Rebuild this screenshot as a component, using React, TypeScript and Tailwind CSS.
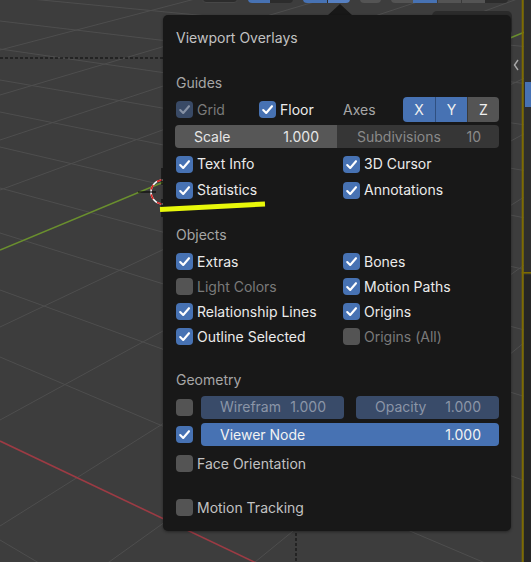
import React from "react";

type CheckState = "on" | "off" | "dim";

function Check({ state }: { state: CheckState }) {
  const bg =
    state === "on" ? "bg-[#4772b3]" : state === "dim" ? "bg-[#394a66]" : "bg-[#545454]";
  return (
    <span className={`relative w-[17px] h-[17px] shrink-0 rounded-[4px] ${bg}`}>
      {state !== "off" && (
        <svg className="absolute inset-0" width="17" height="17" viewBox="0 0 17 17">
          <path
            d="M4.2 9 L7.2 12 L13 5.2"
            fill="none"
            stroke={state === "dim" ? "#8792a5" : "#ffffff"}
            strokeWidth="2.1"
            strokeLinecap="round"
            strokeLinejoin="round"
          />
        </svg>
      )}
    </span>
  );
}

function Item({
  state,
  label,
  tone = "normal",
  className = "",
}: {
  state: CheckState;
  label: string;
  tone?: "normal" | "dim" | "soft";
  className?: string;
}) {
  const color =
    tone === "dim" ? "text-[#7a7a7a]" : tone === "soft" ? "text-[#c2c2c2]" : "text-[#ebebeb]";
  return (
    <div className={`flex items-center gap-[4px] ${className}`}>
      <Check state={state} />
      <span className={color}>{label}</span>
    </div>
  );
}

function Pair({
  left,
  right,
  tall = false,
}: {
  left: React.ReactNode;
  right: React.ReactNode;
  tall?: boolean;
}) {
  return (
    <div className={`grid grid-cols-[167px_1fr] items-center ${tall ? "h-[26px]" : "h-[25px]"}`}>
      {left}
      {right}
    </div>
  );
}

// perspective floor grid of the 3D viewport
const vpA = { x: -1100, y: -110 };
const vpB = { x: 1300, y: -290 };
const rowsA = [-4, 21, 49, 80, 112, 147, 188, 233, 290, 357, 441, 540, 660];
const rowsB = [-10, 50, 95, 140, 190, 250, 327, 420, 526, 640, 770];

function lineThrough(vp: { x: number; y: number }, y0: number) {
  const slope = (y0 - vp.y) / (0 - vp.x);
  return { x1: 0, y1: y0, x2: 531, y2: y0 + slope * 531 };
}

function Viewport() {
  return (
    <svg className="absolute inset-0" width="531" height="562" viewBox="0 0 531 562">
      <rect width="531" height="562" fill="#3d3d3d" />
      {rowsA.map((y) =>
        y === 441 ? null : <line key={"a" + y} {...lineThrough(vpA, y)} stroke="#4e4e4e" strokeWidth="1" />
      )}
      {rowsB.map((y) =>
        y === 250 ? null : <line key={"b" + y} {...lineThrough(vpB, y)} stroke="#4e4e4e" strokeWidth="1" />
      )}
      {/* axes */}
      <line {...lineThrough(vpB, 250)} stroke="#6a8f2e" strokeWidth="1.6" />
      <line x1="0" y1="441" x2="531" y2={441 + 0.476 * 531} stroke="#9c3b44" strokeWidth="1.6" />
      {/* dashed relation line */}
      <line x1="0" y1="58" x2="165" y2="58" stroke="#0a0a0a" strokeWidth="1" strokeDasharray="3 2" />
      <line x1="296" y1="528" x2="296" y2="562" stroke="#0a0a0a" strokeWidth="1" strokeDasharray="3 2" />
      {/* 3D cursor */}
      <circle cx="163" cy="192" r="12" fill="none" stroke="#ffffff" strokeWidth="1.6" />
      <circle cx="163" cy="192" r="12" fill="none" stroke="#e02020" strokeWidth="1.6" strokeDasharray="5 5" />
      <line x1="138" y1="192" x2="156" y2="192" stroke="#000" strokeWidth="1" />
      <line x1="162" y1="168" x2="162" y2="185" stroke="#000" strokeWidth="1" />
      <line x1="162" y1="199" x2="162" y2="217" stroke="#000" strokeWidth="1" />
      {/* right side region border */}
      <rect x="524" y="0" width="7" height="275" fill="#2e2e2e" />
      <rect x="524" y="275" width="7" height="287" fill="#252525" />
      <rect x="525" y="82" width="6" height="25" fill="#4772b3" />
      <rect x="521.7" y="0" width="2" height="562" fill="#7d6b00" />
      <rect x="521.7" y="272" width="9.3" height="1.6" fill="#7d6b00" />
      <path d="M518 60 L514.5 65 L518 70" fill="none" stroke="#a8a8a8" strokeWidth="1.4" />
    </svg>
  );
}

function HeaderButtons() {
  return (
    <div className="absolute left-0 top-[-10px] flex h-[13px] w-full">
      <div className="ml-[202px] w-[36px] rounded-[4px] bg-[#2c2c2c] border border-[#474747]" />
      <div className="ml-[10px] flex w-[45px] overflow-hidden rounded-[4px]">
        <div className="w-[22px] bg-[#4772b3]" />
        <div className="flex-1 bg-[#2c2c2c]" />
      </div>
      <div className="ml-[10px] flex w-[47px] overflow-hidden rounded-[4px]">
        <div className="w-[24px] bg-[#4772b3]" />
        <div className="flex-1 bg-[#5680c2] border-l border-[#2c2c2c]" />
      </div>
      <div className="ml-[10px] w-[21px] rounded-[4px] bg-[#545454]" />
      <div className="ml-[10px] flex w-[117px] overflow-hidden rounded-[4px]">
        <div className="w-[22px] bg-[#545454]" />
        <div className="w-[24px] bg-[#4772b3]" />
        <div className="w-[24px] bg-[#545454] border-l border-[#3a3a3a]" />
        <div className="w-[24px] bg-[#545454] border-l border-[#3a3a3a]" />
        <div className="flex-1 bg-[#2c2c2c]" />
      </div>
    </div>
  );
}

function Field({
  label,
  value,
  className,
  text,
}: {
  label: string;
  value: string;
  className: string;
  text: string;
}) {
  return (
    <div className={`flex h-[23px] items-center justify-between pl-[19px] pr-[18px] ${className} ${text}`}>
      <span>{label}</span>
      <span>{value}</span>
    </div>
  );
}

export default function App() {
  return (
    <div className="relative h-[562px] w-[531px] overflow-hidden font-['Inter','Noto_Sans',sans-serif] text-[14px] leading-[18px]">
      <Viewport />
      <HeaderButtons />
      {/* button partly hidden behind the popover */}
      <div className="absolute left-[432px] top-[11px] h-[24px] w-[80px] rounded-[5px] bg-[#2b2b2b]" />
      {/* popover pointer */}
      <div className="absolute left-[327px] top-[4px] h-0 w-0 border-x-[13px] border-b-[12px] border-x-transparent border-b-[#181818]" />

      <div className="absolute left-[163px] top-[15px] flex h-[516px] w-[348px] flex-col rounded-[5px] bg-[#181818] pl-[13px] pr-[12px] shadow-[0_1px_3px_rgba(0,0,0,0.4)]">
        <div className="flex h-[46px] items-center text-[#c2c2c2]">Viewport Overlays</div>

        <div className="mt-[13px] flex h-[18px] items-center text-[#a6a6a6]">Guides</div>
        <div className="mt-[5px] flex h-[25px] items-center">
          <Item state="dim" label="Grid" tone="dim" className="w-[83px]" />
          <Item state="on" label="Floor" className="w-[84px]" />
          <span className="w-[60px] text-[#a6a6a6]">Axes</span>
          <div className="flex h-[25px] w-[96px] overflow-hidden rounded-[4px] text-[#f0f0f0]">
            <div className="flex w-[32px] items-center justify-center bg-[#4772b3]">X</div>
            <div className="flex w-[32px] items-center justify-center border-l border-[#2f4f80] bg-[#4772b3]">Y</div>
            <div className="flex w-[32px] items-center justify-center border-l border-[#3a3a3a] bg-[#545454]">Z</div>
          </div>
        </div>
        <div className="mt-[3px] ml-[-1px] flex h-[23px] w-[324px] overflow-hidden rounded-[4px]">
          <Field label="Scale" value="1.000" className="w-[162px] bg-[#575757]" text="text-[#e6e6e6]" />
          <Field
            label="Subdivisions"
            value="10"
            className="w-[162px] bg-[#363636] pr-[17px] pl-[20px]"
            text="text-[#8a8a8a]"
          />
        </div>
        <div className="mt-[3px] flex flex-col">
          <Pair
            tall
            left={<Item state="on" label="Text Info" />}
            right={<Item state="on" label="3D Cursor" />}
          />
          <Pair
            tall
            left={<Item state="on" label="Statistics" />}
            right={<Item state="on" label="Annotations" />}
          />
        </div>

        <div className="mt-[23px] flex h-[18px] items-center text-[#a6a6a6]">Objects</div>
        <div className="mt-[5px] flex flex-col">
          <Pair left={<Item state="on" label="Extras" />} right={<Item state="on" label="Bones" />} />
          <Pair
            left={<Item state="off" label="Light Colors" tone="dim" />}
            right={<Item state="on" label="Motion Paths" />}
          />
          <Pair
            left={<Item state="on" label="Relationship Lines" />}
            right={<Item state="on" label="Origins" />}
          />
          <Pair
            left={<Item state="on" label="Outline Selected" />}
            right={<Item state="off" label="Origins (All)" tone="dim" />}
          />
        </div>

        <div className="mt-[22px] flex h-[18px] items-center text-[#a6a6a6]">Geometry</div>
        <div className="mt-[6px] flex h-[24px] items-center">
          <Check state="off" />
          <Field
            label="Wirefram"
            value="1.000"
            className="ml-[8px] w-[143px] rounded-[4px] bg-[#394b69]"
            text="text-[#8b95a7]"
          />
          <Field
            label="Opacity"
            value="1.000"
            className="ml-[12px] w-[143px] rounded-[4px] bg-[#394b69]"
            text="text-[#8b95a7]"
          />
        </div>
        <div className="mt-[4px] flex h-[23px] items-center">
          <Check state="on" />
          <Field
            label="Viewer Node"
            value="1.000"
            className="ml-[8px] w-[298px] rounded-[4px] bg-[#4772b3]"
            text="text-[#f2f2f2]"
          />
        </div>
        <div className="mt-[5px] flex h-[25px] items-center">
          <Item state="off" label="Face Orientation" tone="soft" />
        </div>
        <div className="mt-[19px] flex h-[25px] items-center">
          <Item state="off" label="Motion Tracking" tone="soft" />
        </div>
      </div>

      {/* hand-drawn highlight stroke */}
      <svg className="pointer-events-none absolute inset-0" width="531" height="562" viewBox="0 0 531 562">
        <line x1="160" y1="209.5" x2="265" y2="204" stroke="#e8f80a" strokeWidth="5" />
      </svg>
    </div>
  );
}
